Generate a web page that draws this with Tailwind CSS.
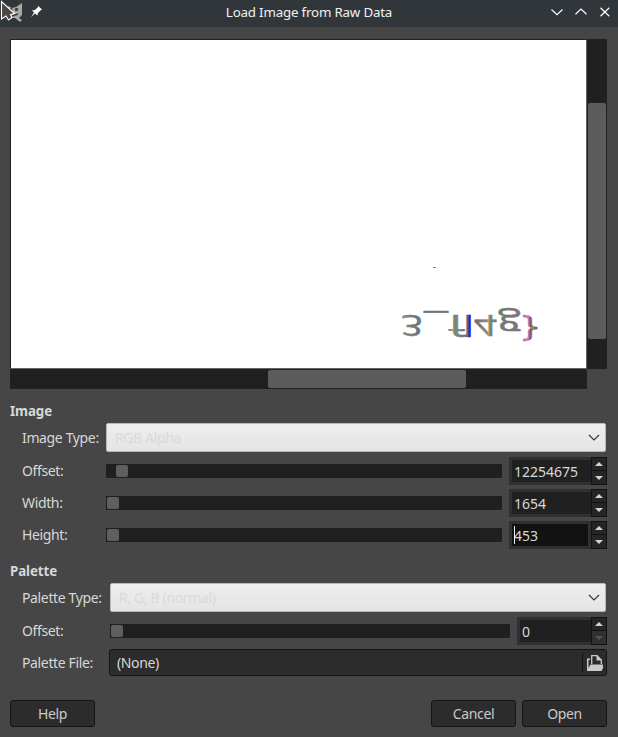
<!DOCTYPE html>
<html lang="en">
<head>
<meta charset="utf-8">
<title>Load Image from Raw Data</title>
<script src="https://cdn.jsdelivr.net/npm/@tailwindcss/browser@4"></script>
</head>
<body class="w-[618px] h-[737px] overflow-hidden bg-[#464646] text-[#d8d8d8] font-['Noto_Sans',sans-serif] text-[14px] tracking-[-0.36px] leading-[18px] flex flex-col">
<header class="h-[27px] shrink-0 bg-[#31363b] flex items-center relative text-[#eff0f1]">
  <svg class="w-[46px] h-[27px]" viewBox="0 0 46 27">
    <path d="M8 6L12 8L16 7L22 3L22 15L19 18L22 20L20 22L15 18L8 18Z" fill="#aaa9a5"/>
    <circle cx="16.5" cy="9.5" r="1.8" fill="#41464a"/><circle cx="11" cy="9.5" r="1.8" fill="#555"/>
    <path d="M12 16L18 14" stroke="#3a3d40" stroke-width="1.5"/>
    <path d="M1.500 1.500V19L6 16L8.500 20L12 17.500L10.500 14.500L14.500 13.500Z" fill="#4b4746" stroke="#fff" stroke-width="1.1"/>
    <path d="M38.500 6L42 9.500L40.500 10.500L38 13L37.500 15.500L35 13.500L31 17L34 12.500L32 10.500L35 10L37.500 7.500Z" fill="#fcfcfc"/>
  </svg>
  <h1 class="absolute left-0 w-full text-center whitespace-nowrap top-[3px] text-[13.33px] tracking-[-0.19px]">Load Image from Raw Data</h1>
  <svg class="ml-auto w-[72px] h-[27px]" viewBox="0 0 72 27" fill="none" stroke="#fcfcfc" stroke-width="1.2">
    <path d="M5.500 9.500L11 14.700L16.500 9.500M29.500 14.200L35 9L40.500 14.200M54.500 7.700L63.300 16.300M63.300 7.700L54.500 16.300"/>
  </svg>
</header>
<main class="pt-3 px-[10px] flex flex-col">
  <div class="grid grid-cols-[577px_20px] grid-rows-[330px_20px]">
    <div class="bg-white border border-l-[#222] border-t-[#222] border-r-[#646464] border-b-[#646464]">
      <svg class="w-[575px] h-[328px]" viewBox="11 40 575 328">
        <defs>
          <linearGradient id="fringe" gradientUnits="userSpaceOnUse" x1="401" y1="0" x2="539" y2="0">
            <stop offset="0" stop-color="#b58ab8"/><stop offset=".02" stop-color="#858585"/><stop offset=".12" stop-color="#707070"/>
            <stop offset=".14" stop-color="#5487c4"/><stop offset=".17" stop-color="#737373"/><stop offset=".36" stop-color="#777"/>
            <stop offset=".37" stop-color="#a8a850"/><stop offset=".39" stop-color="#808080"/><stop offset=".42" stop-color="#6f8f7a"/><stop offset=".44" stop-color="#777"/>
            <stop offset=".485" stop-color="#666"/><stop offset=".495" stop-color="#1c1cf0"/><stop offset=".51" stop-color="#1c1cf0"/><stop offset=".52" stop-color="#666"/>
            <stop offset=".62" stop-color="#888"/><stop offset=".635" stop-color="#b0a055"/><stop offset=".65" stop-color="#777"/><stop offset=".67" stop-color="#5f9b7d"/>
            <stop offset=".69" stop-color="#777"/><stop offset=".72" stop-color="#558a70"/><stop offset=".74" stop-color="#777"/><stop offset=".83" stop-color="#777"/><stop offset=".85" stop-color="#8b679b"/>
            <stop offset=".87" stop-color="#777"/><stop offset=".92" stop-color="#f070dc"/><stop offset=".935" stop-color="#666"/><stop offset=".96" stop-color="#c77725"/><stop offset=".98" stop-color="#3d51d0"/>
          </linearGradient>
        </defs>
        <g fill="url(#fringe)" stroke="url(#fringe)" stroke-width=".5" font-family="Open Sans, sans-serif" letter-spacing="0">
          <g transform="translate(0 315) scale(1 -1)"><text font-size="29" y="0"><tspan x="401" textLength="22" lengthAdjust="spacingAndGlyphs">3</tspan><tspan x="424" textLength="24" lengthAdjust="spacingAndGlyphs">_</tspan><tspan x="448" textLength="17" lengthAdjust="spacingAndGlyphs">f</tspan><tspan x="463" textLength="11" lengthAdjust="spacingAndGlyphs">l</tspan><tspan x="474" textLength="23" lengthAdjust="spacingAndGlyphs">4</tspan><tspan x="498" textLength="23" lengthAdjust="spacingAndGlyphs">g</tspan><tspan x="522" y="-5" textLength="16" lengthAdjust="spacingAndGlyphs">}</tspan></text></g>
        </g>
        <path d="M433 267.500H436" stroke="#888"/>
      </svg>
    </div>
    <div class="bg-[#202020] pt-[64px] pl-px"><div class="w-[18px] h-[236px] rounded-[2px] bg-[#5c5c5c]"></div></div>
    <div class="bg-[#202020] pt-px pl-[258px]"><div class="w-[198px] h-[18px] rounded-[2px] bg-[#5c5c5c]"></div></div>
  </div>

  <h2 class="font-bold text-[13.33px] tracking-[-0.1px] mt-[13px] h-[21px]">Image</h2>
  <div class="flex h-[29px] pl-3">
    <label class="w-[84px] pt-[6px] whitespace-nowrap">Image Type:</label>
    <div class="w-[500px] rounded-[2px] border border-[#b9b9b9] bg-linear-to-b from-[#ededed] to-[#e5e5e5] flex items-center justify-between pl-2 pr-[5px] text-[#dadada]"><span>RGB Alpha</span><svg class="w-3 h-2" viewBox="0 0 12 8" fill="none" stroke="#31363b" stroke-width="1.2"><path d="M1 1L6 6L11 1"/></svg></div>
  </div>
  <div class="flex flex-col gap-1 mt-[5px] pl-3">
    <div class="flex h-7"><label class="w-[84px] pt-[5px]">Offset:</label><div class="w-[396px] h-[14px] mt-[7px] bg-[#202020] pl-[10px] pt-px"><div class="size-3 rounded-[2px] bg-[#5f5f5f]"></div></div>
      <div class="ml-[7px] w-[98px] flex bg-[#303030]"><div class="w-[82px] pl-[3px] py-[3px]"><div class="h-[22px] bg-[#202020] pl-[2px] pt-[3px] tracking-normal">12254675</div></div><div class="w-4 bg-[#111] p-px flex flex-col gap-px"><div class="h-3 bg-[#252525] grid place-items-center"><svg class="w-2 h-1" viewBox="0 0 8 4"><path d="M0 4L4 0L8 4Z" fill="#d2d2d2"/></svg></div><div class="h-[13px] bg-[#252525] grid place-items-center"><svg class="w-2 h-1" viewBox="0 0 8 4"><path d="M0 0L4 4L8 0Z" fill="#d2d2d2"/></svg></div></div></div></div>
    <div class="flex h-7"><label class="w-[84px] pt-[5px]">Width:</label><div class="w-[396px] h-[14px] mt-[7px] bg-[#202020] pl-px pt-px"><div class="size-3 rounded-[2px] bg-[#5f5f5f]"></div></div>
      <div class="ml-[7px] w-[98px] flex bg-[#303030]"><div class="w-[82px] pl-[3px] py-[3px]"><div class="h-[22px] bg-[#202020] pl-[2px] pt-[3px] tracking-normal">1654</div></div><div class="w-4 bg-[#111] p-px flex flex-col gap-px"><div class="h-3 bg-[#252525] grid place-items-center"><svg class="w-2 h-1" viewBox="0 0 8 4"><path d="M0 4L4 0L8 4Z" fill="#d2d2d2"/></svg></div><div class="h-[13px] bg-[#252525] grid place-items-center"><svg class="w-2 h-1" viewBox="0 0 8 4"><path d="M0 0L4 4L8 0Z" fill="#d2d2d2"/></svg></div></div></div></div>
    <div class="flex h-7"><label class="w-[84px] pt-[5px]">Height:</label><div class="w-[396px] h-[14px] mt-[7px] bg-[#202020] pl-px pt-px"><div class="size-3 rounded-[2px] bg-[#5f5f5f]"></div></div>
      <div class="ml-[7px] w-[98px] flex bg-[#303030]"><div class="w-[82px] pl-[3px] pr-[3px] py-[3px]"><div class="h-[22px] bg-[#121212] pl-[2px] pt-[3px] tracking-normal relative">453<span class="absolute left-[2px] top-[2px] w-px h-[18px] bg-[#eee]"></span></div></div><div class="w-4 bg-[#111] p-px flex flex-col gap-px"><div class="h-3 bg-[#252525] grid place-items-center"><svg class="w-2 h-1" viewBox="0 0 8 4"><path d="M0 4L4 0L8 4Z" fill="#d2d2d2"/></svg></div><div class="h-[13px] bg-[#252525] grid place-items-center"><svg class="w-2 h-1" viewBox="0 0 8 4"><path d="M0 0L4 4L8 0Z" fill="#d2d2d2"/></svg></div></div></div></div>
  </div>

  <h2 class="font-bold text-[13.33px] tracking-[-0.1px] mt-[13px] h-[21px]">Palette</h2>
  <div class="flex h-[29px] pl-3">
    <label class="w-[88px] pt-[6px] whitespace-nowrap">Palette Type:</label>
    <div class="w-[496px] rounded-[2px] border border-[#b9b9b9] bg-linear-to-b from-[#ededed] to-[#e5e5e5] flex items-center justify-between pl-2 pr-[5px] text-[#dadada]"><span>R, G, B (normal)</span><svg class="w-3 h-2" viewBox="0 0 12 8" fill="none" stroke="#31363b" stroke-width="1.2"><path d="M1 1L6 6L11 1"/></svg></div>
  </div>
  <div class="flex h-7 mt-[5px] pl-3"><label class="w-[88px] pt-[5px]">Offset:</label><div class="w-[400px] h-[14px] mt-[7px] bg-[#202020] pl-px pt-px"><div class="size-3 rounded-[2px] bg-[#5f5f5f]"></div></div>
    <div class="ml-[7px] w-[90px] flex bg-[#303030]"><div class="w-[74px] pl-[3px] py-[3px]"><div class="h-[22px] bg-[#202020] pl-[2px] pt-[3px] tracking-normal">0</div></div><div class="w-4 bg-[#111] p-px flex flex-col gap-px"><div class="h-3 bg-[#252525] grid place-items-center"><svg class="w-2 h-1" viewBox="0 0 8 4"><path d="M0 4L4 0L8 4Z" fill="#d2d2d2"/></svg></div><div class="h-[13px] bg-[#303030] grid place-items-center"><svg class="w-2 h-1" viewBox="0 0 8 4"><path d="M0 0L4 4L8 0Z" fill="#555"/></svg></div></div></div></div>
  <div class="flex h-[27px] mt-1 pl-3">
    <label class="w-[87px] pt-[5px] whitespace-nowrap">Palette File:</label>
    <div class="w-[498px] rounded-[3px] border border-[#141414] bg-[#2c2c2c] flex items-center justify-between pl-[7px] pr-[3px]"><span>(None)</span><div class="flex items-center gap-1 h-[19px] border-l border-[#111] pl-1"><svg class="w-4 h-4" viewBox="0 0 16 16"><path d="M4.700 9V.7H10L14.300 5V9" fill="none" stroke="#c9c9c9" stroke-width="1.3"/><path d="M9.500 0L15 5.500H9.500Z" fill="#c9c9c9"/><path d="M0 3.500H3V5H1.500V13L3.500 9.500H16V13L14.500 16H0Z" fill="#c9c9c9"/></svg></div></div>
  </div>
  <footer class="flex mt-6 h-[27px] text-[#cacaca]">
    <button class="w-[85px] rounded-[3px] border border-[#141414] bg-[#2c2c2c]">Help</button>
    <button class="ml-auto w-[85px] rounded-[3px] border border-[#141414] bg-[#2c2c2c]">Cancel</button>
    <button class="ml-[6px] mr-px w-[85px] rounded-[3px] border border-[#141414] bg-[#2c2c2c]">Open</button>
  </footer>
</main>
</body>
</html>
